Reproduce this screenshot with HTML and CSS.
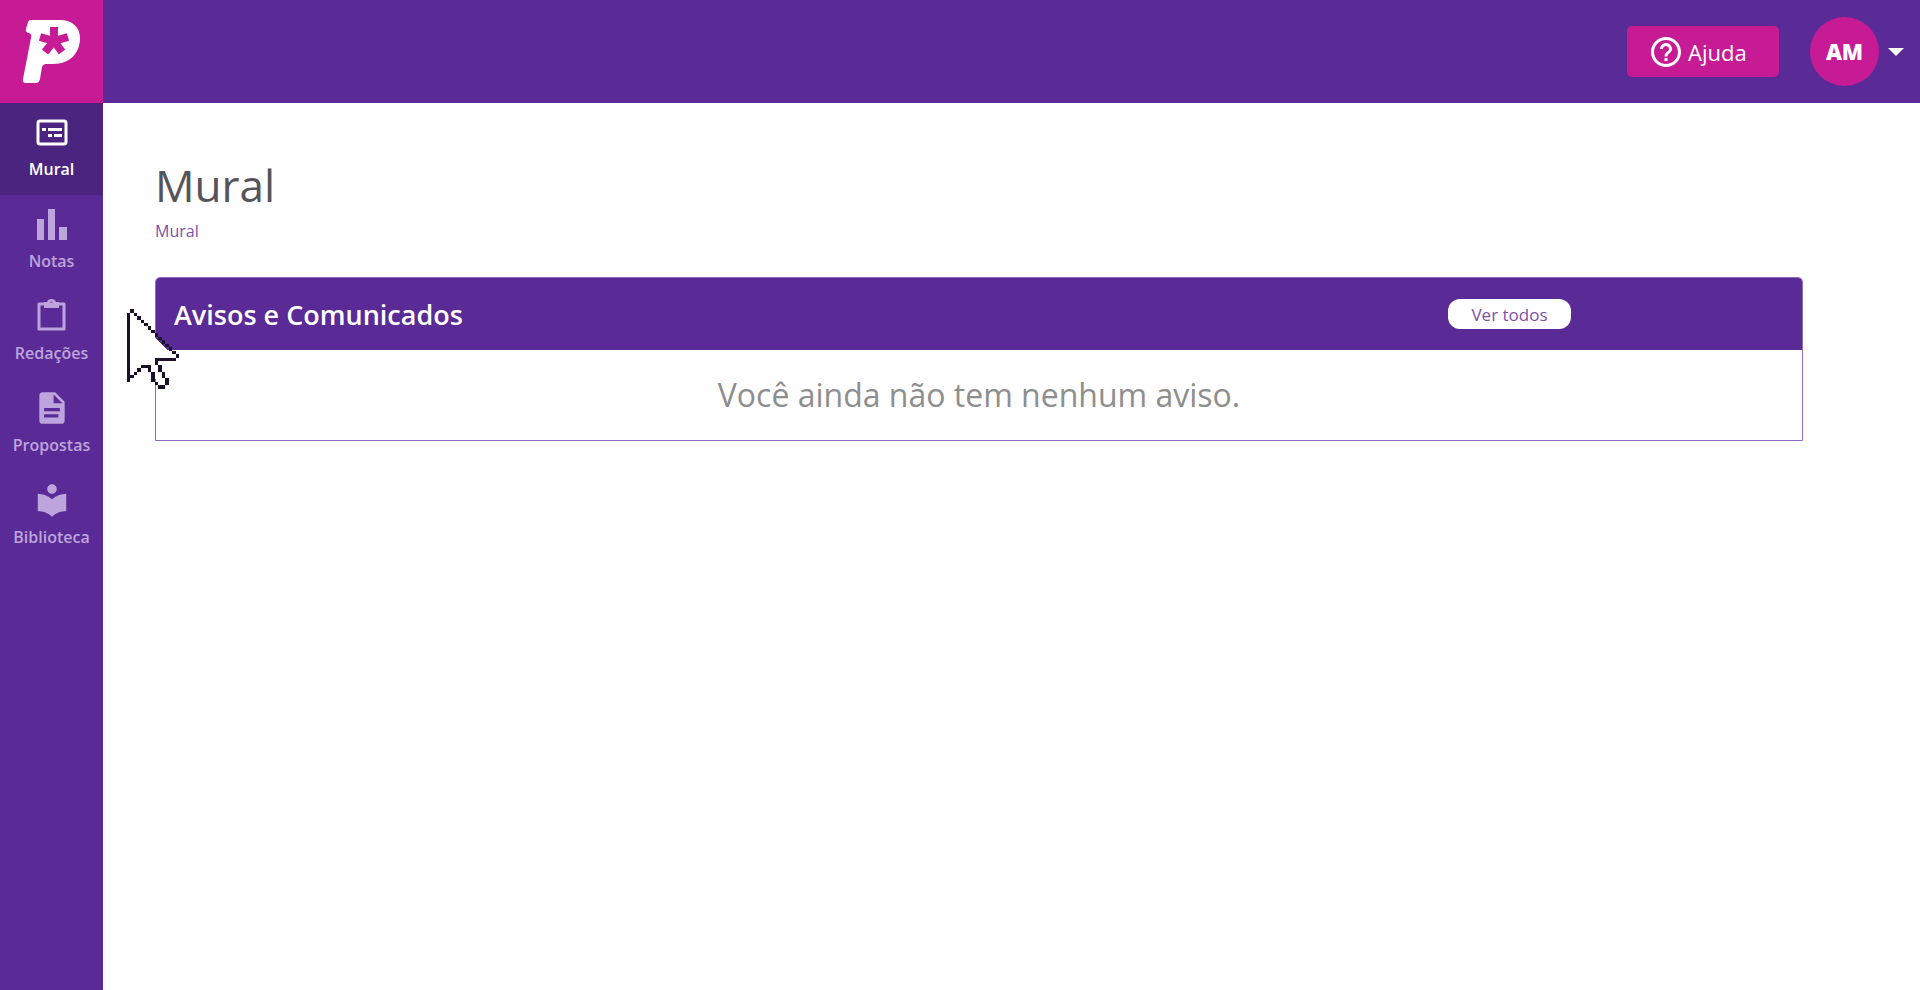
FILE: index.html
```html
<!DOCTYPE html>
<html lang="pt-BR">
<head>
    <meta charset="UTF-8">
    <meta name="viewport" content="width=device-width, initial-scale=1.0">
    <title>Mural</title>
    <link rel="stylesheet" href="styles.css">
</head>
<body>
    <aside class="sidebar">
        <a href="#" class="logo" aria-label="Início">
            <svg viewBox="0 0 103 103" width="103" height="103">
                <path fill="#fff" d="M31 20H60C72 20 80 27 80 38C80 53 70 64 53 64H46Q43 64 42 67L40 79Q39 83 36 83H26Q22 83 23 79L31 38Q32 34 29 33Q25 32 26 29L28 22Q29 20 31 20Z"/>
                <path class="logo-star" d="M54 41V27M54 41L68 37M54 41L62 52M54 41L45 52M54 41L40 37"/>
            </svg>
        </a>
        <nav class="menu">
            <a href="#" class="menu-item active">
                <svg viewBox="0 0 38 38" width="38" height="38">
                    <rect x="5" y="8" width="28" height="23" rx="2" fill="none" stroke="currentColor" stroke-width="3"/>
                    <path fill="currentColor" d="M9 15h4v3H9zM15 15h14v3H15zM15 21h4v3h-4zM21 21h8v3h-8z"/>
                </svg>
                Mural
            </a>
            <a href="#" class="menu-item">
                <svg viewBox="0 0 38 38" width="38" height="38">
                    <path fill="currentColor" d="M4 14h7v21H4zM15 4h7v31h-7zM26 22h8v13h-8z"/>
                </svg>
                Notas
            </a>
            <a href="#" class="menu-item">
                <svg viewBox="0 0 38 38" width="38" height="38">
                    <path fill="none" stroke="currentColor" stroke-width="3" stroke-linejoin="round" d="M6 7H31V32H6Z"/>
                    <path fill="currentColor" fill-rule="evenodd" d="M11 5H14Q15 2 18.500 2T23 5H26V11H11ZM18.500 4.500A1.500 1.500 0 1 0 18.500 7.500A1.500 1.500 0 1 0 18.500 4.500Z"/>
                </svg>
                Redações
            </a>
            <a href="#" class="menu-item">
                <svg viewBox="0 0 24 24" width="38" height="38">
                    <path fill="currentColor" d="M14 2H6c-1.100 0-2 .9-2 2v16c0 1.100.9 2 2 2h12c1.100 0 2-.9 2-2V8l-6-6zm2 16H7v-2h9v2zm1-4H7v-2h10v2zm-4-5V3.500L18.500 9H13z"/>
                </svg>
                Propostas
            </a>
            <a href="#" class="menu-item">
                <svg viewBox="0 0 24 24" width="38" height="38">
                    <path fill="currentColor" d="M12 11.550C9.640 9.350 6.480 8 3 8v11c3.480 0 6.640 1.350 9 3.550 2.360-2.190 5.520-3.550 9-3.550V8c-3.480 0-6.640 1.350-9 3.550zM12 8c1.660 0 3-1.340 3-3s-1.340-3-3-3-3 1.340-3 3 1.340 3 3 3z"/>
                </svg>
                Biblioteca
            </a>
        </nav>
    </aside>

    <div class="page">
        <header class="topbar">
            <button type="button" class="help">
                <svg viewBox="0 0 24 24" width="36" height="36">
                    <path fill="currentColor" d="M11 18h2v-2h-2v2zm1-16C6.480 2 2 6.480 2 12s4.480 10 10 10 10-4.480 10-10S17.520 2 12 2zm0 18c-4.410 0-8-3.590-8-8s3.590-8 8-8 8 3.590 8 8-3.590 8-8 8zm0-14c-2.210 0-4 1.790-4 4h2c0-1.100.9-2 2-2s2 .9 2 2c0 2-3 1.750-3 5h2c0-2.250 3-2.500 3-5 0-2.210-1.790-4-4-4z"/>
                </svg>
                Ajuda
            </button>
            <button type="button" class="user" aria-label="Menu do usuário">
                <span class="avatar">AM</span>
                <span class="caret"></span>
            </button>
        </header>

        <main class="content">
            <h1>Mural</h1>
            <a href="#" class="breadcrumb">Mural</a>

            <section class="card">
                <div class="card-header">
                    <h2>Avisos e Comunicados</h2>
                    <button type="button" class="see-all">Ver todos</button>
                </div>
                <p class="empty">Você ainda não tem nenhum aviso.</p>
            </section>
        </main>
    </div>

    <svg class="cursor" viewBox="0 0 15 23" width="52" height="80" shape-rendering="crispEdges" aria-hidden="true">
        <path fill="#fff" d="M1 1L14 14H9L11 21L9 22L7 17H4L1 20Z"/>
        <path fill="#1c1029" d="M0 1h1v20H0zM1 0h1v1H1zM2 1h1v1H2zM3 2h1v1H3zM4 3h1v1H4zM5 4h1v1H5zM6 5h1v1H6zM7 6h1v1H7zM8 7h1v1H8zM9 8h1v1H9zM10 9h1v1H10zM11 10h1v1H11zM12 11h1v1H12zM13 12h1v1H13zM14 13h1v1H14zM8 14h6v1H9v1H8zM9 16h1v2H9zM10 18h1v2H10zM11 20h1v2H11zM9 22h2v1H9zM8 21h1v1H8zM7 18h1v3H7zM4 16h3v2H6v-1H4zM3 17h1v1H3zM2 18h1v1H2zM1 19h1v1H1z"/>
    </svg>
</body>
</html>
```

FILE: styles.css
```css
* {
    box-sizing: border-box;
}
body {
    display: flex;
    min-height: 100vh;
    margin: 0;
    font-family: "Open Sans", "Noto Sans", sans-serif;
    background-color: #fefefe;
    color: #55545a;
}
a {
    text-decoration: none;
}
button {
    border: none;
    font-family: inherit;
    cursor: pointer;
}

/* menu lateral */
.sidebar {
    flex: none;
    width: 103px;
    background-color: #5a2a96;
}
.logo {
    display: block;
    height: 103px;
    background-color: #c71b95;
}
.logo svg {
    display: block;
}
.logo-star {
    fill: none;
    stroke: #c71b95;
    stroke-width: 8;
}
.menu-item {
    display: flex;
    flex-direction: column;
    align-items: center;
    gap: 6px;
    height: 92px;
    padding-top: 10px;
    font-size: 16px;
    line-height: 24px;
    font-weight: 600;
    color: #bda4dc;
}
.menu-item.active {
    background-color: #4a247f;
    color: #fff;
}

/* topo */
.page {
    flex: 1;
    min-width: 0;
}
.topbar {
    display: flex;
    justify-content: flex-end;
    align-items: center;
    gap: 31px;
    height: 103px;
    padding-right: 16px;
    background-color: #5a2a96;
}
.help {
    display: flex;
    align-items: center;
    gap: 4px;
    width: 152px;
    height: 51px;
    padding: 0 21px;
    border-radius: 5px;
    background-color: #c71b95;
    color: #fff;
    font-size: 22px;
    line-height: 30px;
}
.user {
    display: flex;
    align-items: center;
    gap: 9px;
    padding: 0;
    background: none;
}
.avatar {
    width: 69px;
    height: 69px;
    border-radius: 50%;
    background-color: #c71b95;
    color: #fff;
    font-size: 22px;
    line-height: 69px;
    font-weight: 800;
    text-align: center;
}
.caret {
    border: 8px solid transparent;
    border-top-color: #fff;
    border-bottom: none;
}

/* conteúdo */
.content {
    padding: 51px 117px 51px 52px;
}
h1 {
    margin: 0;
    font-size: 44px;
    line-height: 62px;
    font-weight: 400;
}
.breadcrumb {
    display: block;
    font-size: 16px;
    line-height: 30px;
    color: #7a50ad;
}
.card {
    margin-top: 31px;
    border: 1px solid #8f6abf;
    border-radius: 5px 5px 0 0;
}
.card-header {
    display: flex;
    justify-content: space-between;
    align-items: center;
    height: 72px;
    padding: 0 231px 0 18px;
    border-radius: 4px 4px 0 0;
    background-color: #5a2a96;
}
h2 {
    margin: 0;
    font-size: 27px;
    font-weight: 600;
    color: #fff;
}
.see-all {
    width: 123px;
    height: 30px;
    padding: 0;
    border-radius: 12px;
    background-color: #fff;
    color: #7a50ad;
    font-size: 17px;
}
.empty {
    margin: 0;
    padding: 20px;
    font-size: 32px;
    line-height: 50px;
    text-align: center;
    color: #8e8e8e;
}

/* ponteiro do mouse */
.cursor {
    position: absolute;
    left: 127px;
    top: 309px;
    pointer-events: none;
}
```
